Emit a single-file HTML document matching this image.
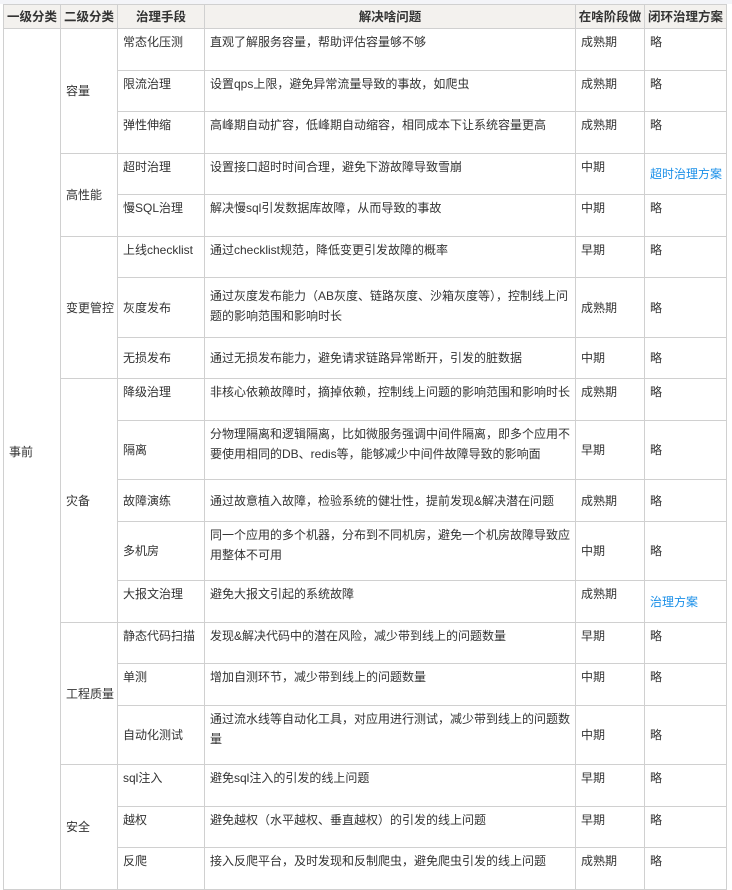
<!DOCTYPE html>
<html><head><meta charset="utf-8"><style>
html,body{margin:0;padding:0;background:#fff;width:732px;height:879px;overflow:hidden}
body{font-family:"Liberation Sans","Noto Sans CJK SC",sans-serif;font-size:12px;color:#333}
.bar{position:absolute;left:0;top:0;width:732px;height:4px;background:#f3f4f8}
table{position:absolute;left:3px;top:4px;border-collapse:collapse;table-layout:fixed;width:723px}
td,th{border:1px solid #d0d0d0;padding:3px 5px 0 5px;vertical-align:top;line-height:20px;white-space:nowrap;overflow:hidden}
th{background:#f3f1ee;font-weight:bold;font-size:12.5px;padding:0;text-align:center;vertical-align:middle;color:#333}
td.m{vertical-align:middle;padding-top:0}
a{color:#1a8fe8;text-decoration:none}
</style></head><body>
<div class="bar"></div>
<table>
<colgroup><col style="width:57px"><col style="width:57px"><col style="width:87px"><col style="width:371px"><col style="width:69px"><col style="width:82px"></colgroup>
<tr style="height:24px"><th>一级分类</th><th>二级分类</th><th>治理手段</th><th>解决啥问题</th><th>在啥阶段做</th><th>闭环治理方案</th></tr>
<tr style="height:42px"><td class="m" rowspan="19" style="padding-bottom:14px">事前</td><td class="m" rowspan="3">容量</td><td>常态化压测</td><td>直观了解服务容量，帮助评估容量够不够</td><td>成熟期</td><td>略</td></tr>
<tr style="height:41px"><td>限流治理</td><td>设置qps上限，避免异常流量导致的事故，如爬虫</td><td>成熟期</td><td>略</td></tr>
<tr style="height:42px"><td>弹性伸缩</td><td>高峰期自动扩容，低峰期自动缩容，相同成本下让系统容量更高</td><td>成熟期</td><td>略</td></tr>
<tr style="height:41px"><td class="m" rowspan="2">高性能</td><td>超时治理</td><td>设置接口超时时间合理，避免下游故障导致雪崩</td><td>中期</td><td class="m"><a>超时治理方案</a></td></tr>
<tr style="height:42px"><td>慢SQL治理</td><td>解决慢sql引发数据库故障，从而导致的事故</td><td>中期</td><td>略</td></tr>
<tr style="height:41px"><td class="m" rowspan="3">变更管控</td><td>上线checklist</td><td>通过checklist规范，降低变更引发故障的概率</td><td>早期</td><td>略</td></tr>
<tr style="height:60px"><td class="m">灰度发布</td><td class="m" style="padding-bottom:4px">通过灰度发布能力（AB灰度、链路灰度、沙箱灰度等），控制线上问<br>题的影响范围和影响时长</td><td class="m">成熟期</td><td class="m">略</td></tr>
<tr style="height:41px"><td class="m">无损发布</td><td class="m">通过无损发布能力，避免请求链路异常断开，引发的脏数据</td><td class="m">中期</td><td class="m">略</td></tr>
<tr style="height:42px"><td class="m" rowspan="5">灾备</td><td>降级治理</td><td>非核心依赖故障时，摘掉依赖，控制线上问题的影响范围和影响时长</td><td>成熟期</td><td>略</td></tr>
<tr style="height:59px"><td class="m">隔离</td><td style="padding-top:3px">分物理隔离和逻辑隔离，比如微服务强调中间件隔离，即多个应用不<br>要使用相同的DB、redis等，能够减少中间件故障导致的影响面</td><td class="m">早期</td><td class="m">略</td></tr>
<tr style="height:42px"><td class="m">故障演练</td><td class="m">通过故意植入故障，检验系统的健壮性，提前发现&amp;解决潜在问题</td><td class="m">成熟期</td><td class="m">略</td></tr>
<tr style="height:59px"><td class="m">多机房</td><td style="padding-top:3px">同一个应用的多个机器，分布到不同机房，避免一个机房故障导致应<br>用整体不可用</td><td class="m">中期</td><td class="m">略</td></tr>
<tr style="height:42px"><td>大报文治理</td><td>避免大报文引起的系统故障</td><td>成熟期</td><td class="m"><a>治理方案</a></td></tr>
<tr style="height:41px"><td class="m" rowspan="3">工程质量</td><td>静态代码扫描</td><td>发现&amp;解决代码中的潜在风险，减少带到线上的问题数量</td><td>早期</td><td>略</td></tr>
<tr style="height:42px"><td>单测</td><td>增加自测环节，减少带到线上的问题数量</td><td>中期</td><td>略</td></tr>
<tr style="height:59px"><td class="m">自动化测试</td><td style="padding-top:3px">通过流水线等自动化工具，对应用进行测试，减少带到线上的问题数<br>量</td><td class="m">中期</td><td class="m">略</td></tr>
<tr style="height:42px"><td class="m" rowspan="3">安全</td><td>sql注入</td><td>避免sql注入的引发的线上问题</td><td>早期</td><td>略</td></tr>
<tr style="height:41px"><td>越权</td><td>避免越权（水平越权、垂直越权）的引发的线上问题</td><td>早期</td><td>略</td></tr>
<tr style="height:42px"><td>反爬</td><td>接入反爬平台，及时发现和反制爬虫，避免爬虫引发的线上问题</td><td>成熟期</td><td>略</td></tr>
</table>
</body></html>
